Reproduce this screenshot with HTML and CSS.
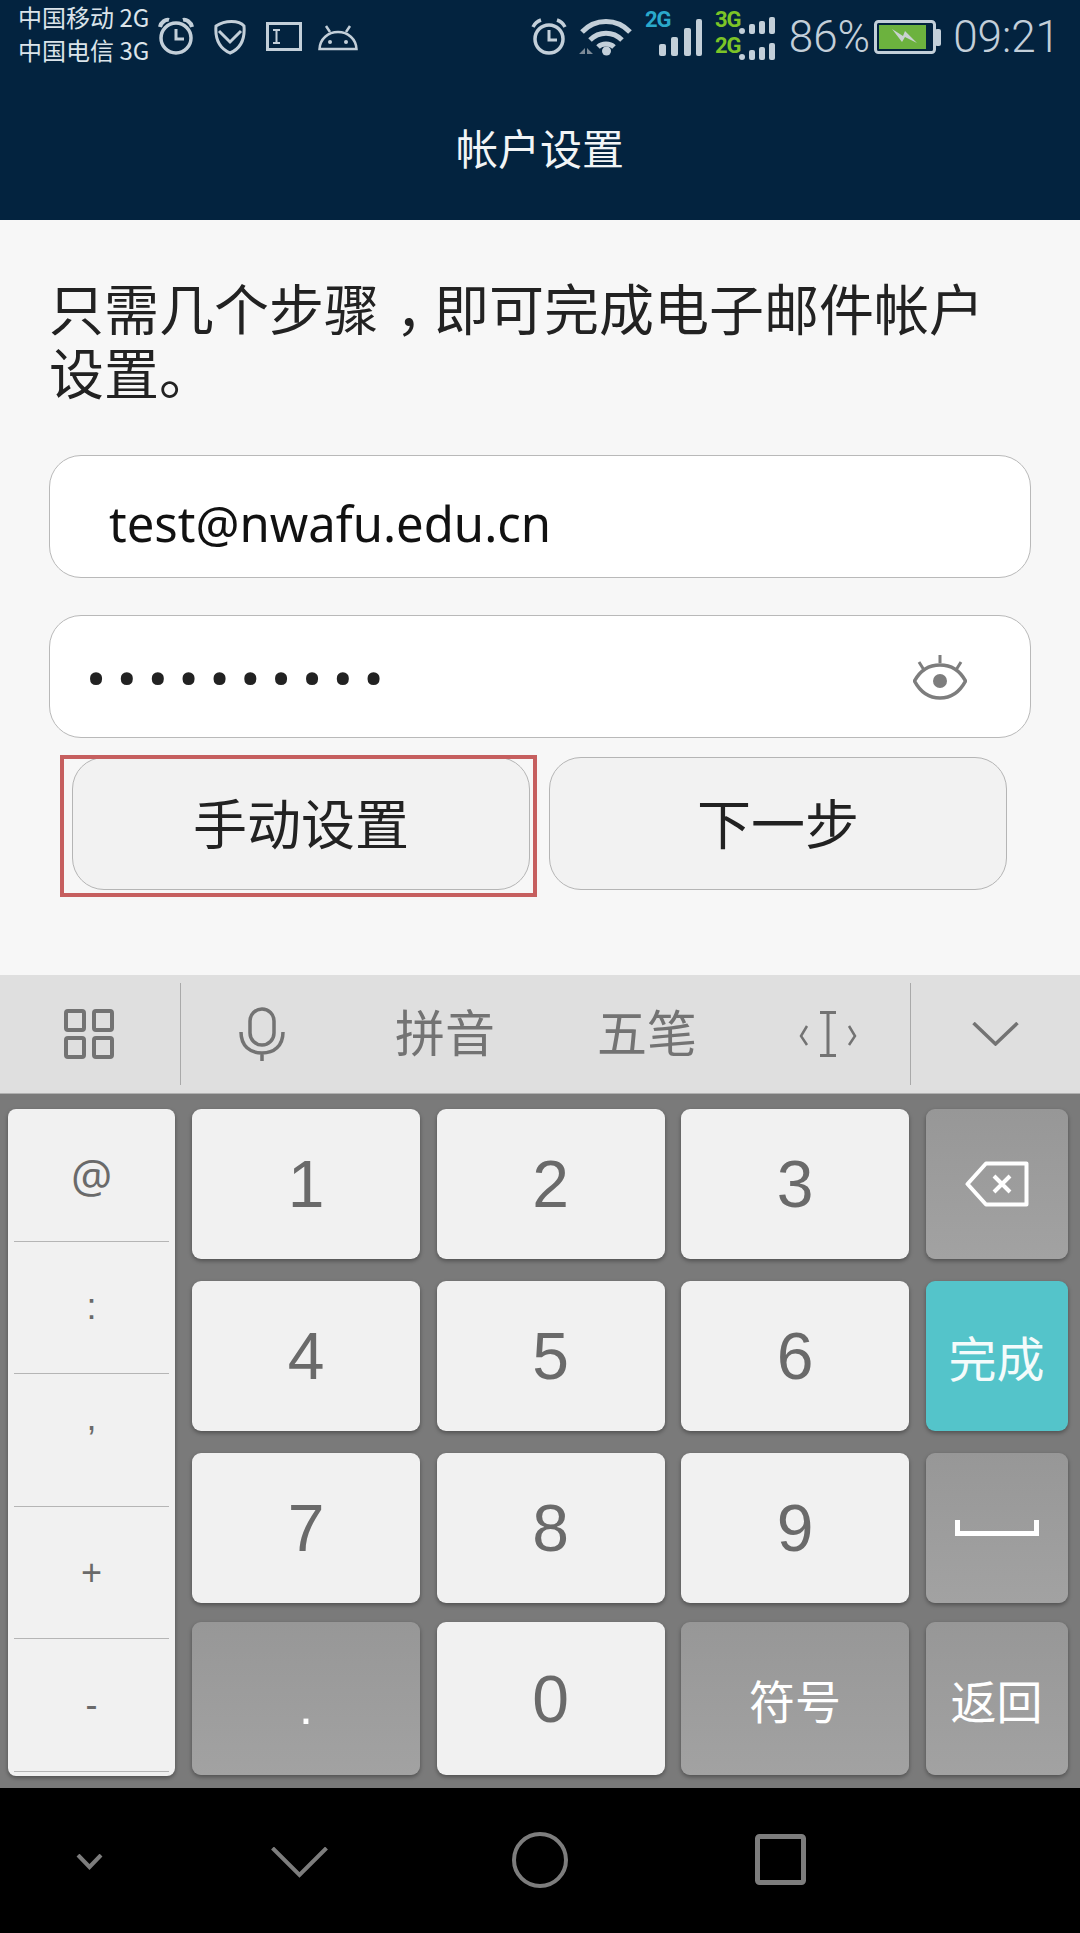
FILE: index.html
```html
<!DOCTYPE html>
<html lang="zh-CN">
<head>
  <meta charset="UTF-8">
  <meta name="viewport" content="width=device-width, initial-scale=1.0">
  <title>帐户设置</title>
  <link rel="stylesheet" href="styles.css">
</head>
<body>

  <header class="header">
    <div class="status">
      <div class="carriers">
        <div>中国移动 2G</div>
        <div>中国电信 3G</div>
      </div>
      <div class="status-left">
        <svg class="ic" width="40" height="40" viewBox="0 0 40 40"><circle cx="18" cy="21" r="15" stroke-width="3.500"/><path d="M18 12v10h8" stroke-width="3"/><path d="M2 10c1-5 6-8 9-7M34 10c-1-5-6-8-9-7" stroke-width="4"/></svg>
        <svg class="ic" width="36" height="36" viewBox="0 0 36 36"><path d="M2 7c9-6 23-6 28 0 1 12-2 22-14 27C5 29 1 19 2 7z" stroke-width="3"/><path d="M5 12l11 11 11-11" stroke-width="3"/></svg>
        <svg class="ic" width="36" height="30" viewBox="0 0 36 30"><rect x="1.500" y="1.500" width="33" height="26" stroke-width="3"/><path d="M7 8h7M7 21h7M10.500 8v13" stroke-width="2"/></svg>
        <svg class="ic ic-droid" width="40" height="26" viewBox="0 0 40 26"><path d="M1.500 24C2 14 10 7 20 7s18 7 18.500 17z" stroke-width="2.500"/><path d="M8 1l4 6M32 1l-4 6" stroke-width="2.500"/><circle class="solid" cx="12" cy="17" r="2"/><circle class="solid" cx="28" cy="17" r="2"/></svg>
      </div>
      <div class="status-right">
        <svg class="ic" width="36" height="40" viewBox="0 0 36 40"><circle cx="18" cy="22" r="14" stroke-width="3.500"/><path d="M18 13v10h8" stroke-width="3"/><path d="M2 10c2-4 5-6 8-7M34 10c-2-4-5-6-8-7" stroke-width="3.500"/></svg>
        <svg class="ic wifi" width="54" height="40" viewBox="0 0 54 40"><path d="M3 15c13-14 35-14 48 0M11 23c9-9 23-9 32 0M19 30c4-4 12-4 16 0" stroke-width="5"/><circle class="solid" cx="27.500" cy="34" r="4.500"/><path class="dim" d="M0 37l6-6v6zM8 31l6 6H8z"/></svg>
        <svg class="sig" width="58" height="66" viewBox="0 0 58 66"><text class="net blue" x="0" y="23">2G</text><rect x="14" y="40" width="7" height="12" rx="2"/><rect x="26" y="33" width="7" height="19" rx="2"/><rect x="39" y="24" width="7" height="28" rx="2"/><rect x="51" y="15" width="6" height="37" rx="2"/></svg>
        <svg class="sig" width="62" height="66" viewBox="0 0 62 66"><text class="net green" x="0" y="23">3G</text><text class="net green" x="0" y="49">2G</text><rect x="24" y="24" width="6" height="6" rx="3"/><rect x="34" y="20" width="6" height="10" rx="2"/><rect x="44" y="17" width="6" height="13" rx="2"/><rect x="54" y="13" width="6" height="17" rx="2"/><rect x="24" y="50" width="6" height="6" rx="3"/><rect x="34" y="46" width="6" height="10" rx="2"/><rect x="44" y="43" width="6" height="13" rx="2"/><rect x="54" y="39" width="6" height="17" rx="2"/></svg>
        <span class="percent">86%</span>
        <svg class="batt" width="67" height="34" viewBox="0 0 67 34"><rect x="1.500" y="1.500" width="59" height="31" rx="3" fill="none" stroke="#c3cfd9" stroke-width="3"/><rect x="5" y="5" width="47" height="24" fill="#6cb23e"/><path d="M18 9l11 7 2-5 12 12-12-6-3 5z" fill="#c9d2cf"/><rect x="61" y="9" width="6" height="17" rx="2" fill="#c3cfd9"/></svg>
        <span class="time">09:21</span>
      </div>
    </div>
    <div class="title">帐户设置</div>
  </header>

  <main class="content">
    <h1 class="intro">只需几个步骤<span class="comma">，</span>即可完成电子邮件帐户<br>设置。</h1>
    <div class="field field-mail">test@nwafu.edu.cn</div>
    <div class="field field-pass">
      <span class="dots">••••••••••</span>
      <svg class="eye" width="54" height="46" viewBox="0 0 54 46" fill="none" stroke="#7d7d7d"><path d="M1.500 27C8 15 17 11 27 11s19 4 25.500 16C46 39 37 44 27 44S8 39 1.500 27z" stroke-width="3.500"/><path d="M27 1v8M6 8l5 8M48 8l-5 8" stroke-width="3"/><circle cx="27" cy="27" r="7" fill="#7d7d7d" stroke="none"/></svg>
    </div>
    <div class="actions">
      <div class="btn btn-marked">手动设置</div>
      <div class="btn">下一步</div>
    </div>
  </main>

  <div class="toolbar">
    <div class="tool-cell">
      <svg class="tool-grid" width="50" height="50" viewBox="0 0 50 50" fill="none" stroke="#737373" stroke-width="4"><rect x="2" y="2" width="18" height="19" rx="2"/><rect x="30" y="2" width="18" height="19" rx="2"/><rect x="2" y="29" width="18" height="19" rx="2"/><rect x="30" y="29" width="18" height="19" rx="2"/></svg>
    </div>
    <div class="tool-mid">
      <svg class="mic" width="46" height="54" viewBox="0 0 46 54" fill="none" stroke="#737373" stroke-width="3.500"><rect x="11" y="2" width="24" height="36" rx="12"/><path d="M2 25c0 14 9 21 21 21s21-7 21-21M23 46v8"/></svg>
      <span class="tool-word">拼音</span>
      <span class="tool-word">五笔</span>
      <svg class="cursor" width="58" height="46" viewBox="0 0 58 46" fill="none" stroke="#737373"><path d="M21 1.500h16M21 44.500h16M29 1.500v43" stroke-width="3"/><path d="M8 15l-6 10 6 9M50 15l6 10-6 9" stroke-width="2.500"/></svg>
    </div>
    <div class="tool-cell tool-last">
      <svg width="47" height="24" viewBox="0 0 47 24" fill="none" stroke="#737373" stroke-width="3.500"><path d="M1.500 1l22 21 22-21"/></svg>
    </div>
  </div>

  <div class="keyboard">
    <div class="side">
      <div class="sym sym-at">@</div>
      <div class="sym">:</div>
      <div class="sym sym-comma"><span>,</span></div>
      <div class="sym">+</div>
      <div class="sym">-</div>
    </div>
    <div class="keys">
      <div class="key">1</div>
      <div class="key">2</div>
      <div class="key">3</div>
      <div class="key key-gray">
        <svg width="64" height="46" viewBox="0 0 64 46" fill="none" stroke="#fff" stroke-width="4"><path d="M2.500 23L21 2.500h40.500v41H21z" stroke-linejoin="round"/><path d="M29 15l16 16M45 15L29 31"/></svg>
      </div>
      <div class="key">4</div>
      <div class="key">5</div>
      <div class="key">6</div>
      <div class="key key-done">完成</div>
      <div class="key">7</div>
      <div class="key">8</div>
      <div class="key">9</div>
      <div class="key key-gray">
        <svg width="84" height="16" viewBox="0 0 84 16" fill="none" stroke="#fff" stroke-width="5"><path d="M2.500 0v13.500h79V0"/></svg>
      </div>
      <div class="key key-gray key-dot key-bottom">.</div>
      <div class="key key-bottom">0</div>
      <div class="key key-gray key-word key-bottom">符号</div>
      <div class="key key-gray key-word key-bottom">返回</div>
    </div>
  </div>

  <nav class="navbar">
    <svg class="nav-small" width="27" height="16" viewBox="0 0 27 16" fill="none" stroke="#7d7d7d" stroke-width="4"><path d="M2 1l11.500 12L25 1"/></svg>
    <svg class="nav-back" width="57" height="31" viewBox="0 0 57 31" fill="none" stroke="#7d7d7d" stroke-width="4"><path d="M1.500 1l27 27 27-27"/></svg>
    <svg class="nav-home" width="56" height="56" viewBox="0 0 56 56" fill="none" stroke="#7d7d7d" stroke-width="4"><circle cx="28" cy="28" r="26"/></svg>
    <svg class="nav-recent" width="51" height="51" viewBox="0 0 51 51" fill="none" stroke="#7d7d7d" stroke-width="5"><rect x="2.500" y="2.500" width="46" height="46" rx="2"/></svg>
  </nav>

</body>
</html>
```

FILE: styles.css
```css
* {
  box-sizing: border-box;
}

body {
  margin: 0;
  width: 1080px;
  height: 1933px;
  overflow: hidden;
  background: #000;
  font-family: "Noto Sans CJK SC", Roboto, sans-serif;
}

/* header + status bar */
.header {
  height: 220px;
  background: #03233f;
}

.status {
  height: 74px;
  display: flex;
  align-items: center;
  padding: 0 20px 0 18px;
}

.carriers {
  width: 132px;
  font-size: 24px;
  line-height: 33px;
  color: #dbe4ea;
  white-space: nowrap;
  margin-top: -8px;
}

.status-left {
  display: flex;
  align-items: center;
  gap: 16px;
  margin-left: 8px;
}

.status-right {
  display: flex;
  align-items: center;
  gap: 12px;
  margin-left: auto;
}

.ic {
  fill: none;
  stroke: #c3cfd9;
}

.ic .solid {
  fill: #c3cfd9;
  stroke: none;
}

.ic .dim {
  fill: #7c8a97;
  stroke: none;
}

.ic-droid {
  margin-top: 2px;
}

.sig {
  fill: #c3cfd9;
}

.net {
  font-family: Roboto, sans-serif;
  font-size: 22px;
  font-weight: 700;
  letter-spacing: -1px;
}

.blue {
  fill: #2aa9cb;
}

.green {
  fill: #7cc427;
}

.percent,
.time {
  font-family: Roboto, sans-serif;
  font-size: 44px;
  font-weight: 300;
  color: #c3cfd9;
  line-height: 1;
}

.batt {
  margin-left: -8px;
}

.title {
  height: 144px;
  display: flex;
  align-items: center;
  justify-content: center;
  font-size: 42px;
  color: #f1f4f6;
}

/* form */
.content {
  height: 755px;
  background: #f7f7f7;
  padding: 54px 49px 0;
}

.intro {
  margin: 0 0 53px;
  font-size: 55px;
  font-weight: 400;
  line-height: 64px;
  color: #222;
  white-space: nowrap;
}

.comma {
  display: inline-block;
  font-feature-settings: "halt";
  padding: 0 0.2em 0 0.3em;
}

.field {
  height: 123px;
  background: #fff;
  border: 1px solid #b9b9b9;
  border-radius: 32px;
  display: flex;
  align-items: center;
  margin-bottom: 37px;
}

.field-mail {
  padding: 12px 0 0 59px;
  font-family: "Noto Sans", sans-serif;
  font-size: 49px;
  color: #111;
}

.field-pass {
  margin-bottom: 19px;
  padding: 8px 63px 0 36px;
  justify-content: space-between;
}

.dots {
  font-family: Roboto, sans-serif;
  font-size: 60px;
  letter-spacing: 10.600px;
  color: #222;
}

.eye {
  margin-top: -8px;
}

.actions {
  display: flex;
  gap: 19px;
  padding-left: 23px;
}

.btn {
  width: 458px;
  height: 133px;
  background: #f2f2f2;
  border: 1px solid #b5b5b5;
  border-radius: 32px;
  padding-bottom: 4px;
  display: flex;
  align-items: center;
  justify-content: center;
  font-size: 54px;
  color: #222;
}

.btn-marked {
  position: relative;
}

.btn-marked::after {
  content: "";
  position: absolute;
  left: -13px;
  right: -8px;
  top: -3px;
  bottom: -8px;
  border: 4px solid #c65f5f;
}

/* ime toolbar */
.toolbar {
  height: 118px;
  background: #dfdfdf;
  display: flex;
  align-items: center;
  color: #737373;
}

.tool-cell {
  width: 181px;
  height: 102px;
  display: flex;
  align-items: center;
  justify-content: center;
  border-right: 1px solid #a9a9a9;
}

.tool-grid {
  margin-right: 2px;
}

.tool-mid {
  width: 729px;
  display: flex;
  align-items: center;
  padding-left: 58px;
}

.tool-word {
  font-size: 50px;
  margin: -8px 102px 0 0;
  line-height: 1;
}

.mic {
  margin-right: 110px;
}

.tool-last {
  width: 170px;
  border-right: 0;
  border-left: 1px solid #a9a9a9;
}

/* keyboard */
.keyboard {
  height: 695px;
  background: #7a7a7a;
  border-top: 1px solid #b0b0b0;
  padding: 15px 12px 0 8px;
  display: flex;
  align-items: flex-start;
}

.side {
  width: 167px;
  height: 667px;
  background: #f1f1f1;
  border-radius: 8px;
  padding: 0 6px 4px;
  display: flex;
  flex-direction: column;
  box-shadow: 0 2px 4px rgba(0, 0, 0, 0.35);
}

.sym {
  flex: 1 1 0;
  border-bottom: 1px solid #b5b5b5;
  display: flex;
  align-items: center;
  justify-content: center;
  font-family: "Liberation Sans", sans-serif;
  font-size: 36px;
  color: #6a6a6a;
}

.sym-at {
  font-size: 46px;
  font-family: "Open Sans", sans-serif;
}

.sym-comma span {
  margin-bottom: 44px;
}

.keys {
  margin-left: 17px;
  display: grid;
  grid-template-columns: 228px 228px 228px 142px;
  grid-template-rows: repeat(4, 150px);
  column-gap: 16.500px;
  row-gap: 22px;
}

.key {
  background: #f1f1f1;
  border-radius: 9px;
  box-shadow: 0 2px 4px rgba(0, 0, 0, 0.35);
  display: flex;
  align-items: center;
  justify-content: center;
  font-family: "Liberation Sans", sans-serif;
  font-size: 66px;
  color: #6a6a6a;
}

.key-gray {
  background: linear-gradient(#979797, #a2a2a2);
  color: #fff;
}

.key-done {
  background: #54c4ca;
  color: #f4fbfb;
  font-family: "Noto Sans CJK SC", sans-serif;
  font-size: 48px;
}

.key-word {
  font-family: "Noto Sans CJK SC", sans-serif;
  font-size: 46px;
}

.key-dot {
  font-size: 50px;
  padding-top: 16px;
}

.key-bottom {
  margin-top: -3px;
}

/* android nav */
.navbar {
  height: 145px;
  background: #000;
  display: flex;
  align-items: center;
  padding-left: 76px;
}

.nav-small {
  margin-right: 168px;
  margin-top: 2px;
}

.nav-back {
  margin-right: 184px;
  margin-top: 4px;
}

.nav-home {
  margin-right: 187px;
  margin-top: -2px;
}

.nav-recent {
  margin-top: -2px;
}
```
